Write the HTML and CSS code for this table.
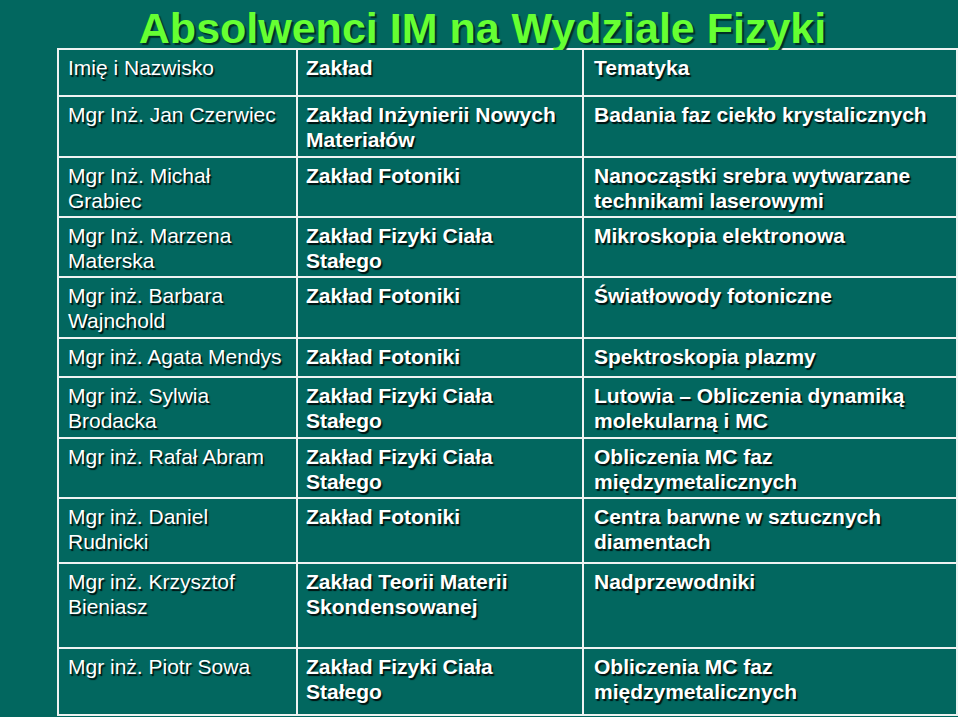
FILE: index.html
```html
<!DOCTYPE html>
<html lang="pl">
<head>
<meta charset="utf-8">
<title>Absolwenci IM na Wydziale Fizyki</title>
<link rel="stylesheet" href="styles.css">
</head>
<body>
<div class="slide">
  <h1 class="title">Absolwenci IM na Wydziale Fizyki</h1>
  <div class="grid">
    <div class="cell name">Imię i Nazwisko</div>
    <div class="cell bold">Zakład</div>
    <div class="cell bold">Tematyka</div>

    <div class="cell name">Mgr Inż. Jan Czerwiec</div>
    <div class="cell bold">Zakład Inżynierii Nowych Materiałów</div>
    <div class="cell bold">Badania faz ciekło krystalicznych</div>

    <div class="cell name">Mgr Inż. Michał<br>Grabiec</div>
    <div class="cell bold">Zakład Fotoniki</div>
    <div class="cell bold">Nanocząstki srebra wytwarzane technikami laserowymi</div>

    <div class="cell name">Mgr Inż. Marzena<br>Materska</div>
    <div class="cell bold">Zakład Fizyki Ciała<br>Stałego</div>
    <div class="cell bold">Mikroskopia elektronowa</div>

    <div class="cell name">Mgr inż. Barbara<br>Wajnchold</div>
    <div class="cell bold">Zakład Fotoniki</div>
    <div class="cell bold">Światłowody fotoniczne</div>

    <div class="cell name">Mgr inż. Agata Mendys</div>
    <div class="cell bold">Zakład Fotoniki</div>
    <div class="cell bold">Spektroskopia plazmy</div>

    <div class="cell name">Mgr inż. Sylwia<br>Brodacka</div>
    <div class="cell bold">Zakład Fizyki Ciała<br>Stałego</div>
    <div class="cell bold">Lutowia – Obliczenia dynamiką molekularną i MC</div>

    <div class="cell name">Mgr inż. Rafał Abram</div>
    <div class="cell bold">Zakład Fizyki Ciała<br>Stałego</div>
    <div class="cell bold">Obliczenia MC faz<br>międzymetalicznych</div>

    <div class="cell name">Mgr inż. Daniel<br>Rudnicki</div>
    <div class="cell bold">Zakład Fotoniki</div>
    <div class="cell bold">Centra barwne w sztucznych diamentach</div>

    <div class="cell name">Mgr inż. Krzysztof<br>Bieniasz</div>
    <div class="cell bold">Zakład Teorii Materii<br>Skondensowanej</div>
    <div class="cell bold">Nadprzewodniki</div>

    <div class="cell name">Mgr inż. Piotr Sowa</div>
    <div class="cell bold">Zakład Fizyki Ciała<br>Stałego</div>
    <div class="cell bold">Obliczenia MC faz<br>międzymetalicznych</div>
  </div>
</div>
</body>
</html>
```

FILE: styles.css
```css
html, body {
  margin: 0;
  padding: 0;
  background: #ffffff;
}

.slide {
  width: 958px;
  height: 717px;
  background: #02675f;
  font-family: "Liberation Sans", Arial, sans-serif;
  color: #ffffff;
  overflow: hidden;
}

.title {
  margin: 0;
  height: 48px;
  box-sizing: border-box;
  padding: 8px 0 0 7px;
  font-size: 43px;
  line-height: 40px;
  font-weight: bold;
  text-align: center;
  color: #66ff33;
  text-shadow: 2px 2px 1px rgba(0, 40, 30, 0.9);
  white-space: nowrap;
}

.grid {
  margin-left: 57px;
  width: 901px;
  box-sizing: border-box;
  display: grid;
  grid-template-columns: 237px 284px 372px;
  grid-template-rows: 45px 59px 58px 58px 59px 37px 59px 58px 63px 83px 65px;
  gap: 2px;
  padding: 2px;
  background: #eef3f2;
}

.cell {
  background: #02675f;
  font-size: 21px;
  line-height: 25px;
  padding: 5px 6px 0 9px;
  text-shadow: 1.5px 1.5px 1px rgba(0, 0, 0, 0.85);
  overflow: hidden;
}

.name {
  font-weight: normal;
}

.bold {
  font-weight: bold;
  padding-left: 8px;
}

.grid .bold:nth-child(3n) {
  padding-left: 10px;
}
```
